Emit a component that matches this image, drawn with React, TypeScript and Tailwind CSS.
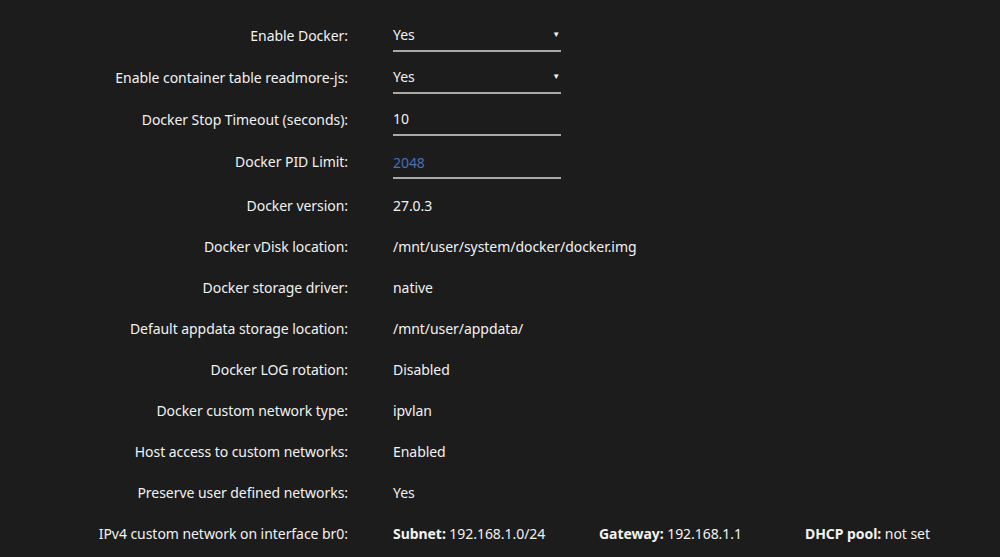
import React from 'react'

const font = { fontFamily: '"Noto Sans", "Open Sans", sans-serif' }

function Label({ children }: { children: React.ReactNode }) {
  return <div className="w-[348px] shrink-0 text-right">{children}</div>
}

function Select({ value }: { value: string }) {
  return (
    <div className="relative w-[168px] h-[33px] pt-[1px] flex items-center border-b-2 border-[#a8a8a8]">
      <span>{value}</span>
      <span className="absolute right-[1px] top-1/2 -translate-y-1/2 text-[8px] leading-none">▼</span>
    </div>
  )
}

function Input({ value, placeholder }: { value?: string; placeholder?: string }) {
  return (
    <div className="w-[168px] h-[33px] pt-[1px] flex items-center border-b-2 border-[#a8a8a8]">
      {value ? <span>{value}</span> : <span className="text-[#4a6fb5]">{placeholder}</span>}
    </div>
  )
}

const info: [string, string][] = [
  ['Docker version:', '27.0.3'],
  ['Docker vDisk location:', '/mnt/user/system/docker/docker.img'],
  ['Docker storage driver:', 'native'],
  ['Default appdata storage location:', '/mnt/user/appdata/'],
  ['Docker LOG rotation:', 'Disabled'],
  ['Docker custom network type:', 'ipvlan'],
  ['Host access to custom networks:', 'Enabled'],
  ['Preserve user defined networks:', 'Yes'],
]

export default function App() {
  return (
    <div className="w-[1000px] h-[557px] overflow-hidden bg-[#1c1c1c] text-[#f2f2f2] text-[14px] tracking-[-0.05px] pt-[14px]" style={font}>
      <div className="flex items-center h-[42px]">
        <Label>Enable Docker:</Label>
        <div className="ml-[45px]"><Select value="Yes" /></div>
      </div>
      <div className="flex items-center h-[42px]">
        <Label>Enable container table readmore-js:</Label>
        <div className="ml-[45px]"><Select value="Yes" /></div>
      </div>
      <div className="flex items-center h-[42px]">
        <Label>Docker Stop Timeout (seconds):</Label>
        <div className="ml-[45px]"><Input value="10" /></div>
      </div>
      <div className="flex items-center h-[42px] mb-[3px]">
        <Label>Docker PID Limit:</Label>
        <div className="ml-[45px] mt-[3px]"><Input placeholder="2048" /></div>
      </div>
      {info.map(([k, v]) => (
        <div key={k} className="flex items-center h-[41px]">
          <Label>{k}</Label>
          <div className="ml-[45px]">{v}</div>
        </div>
      ))}
      <div className="flex items-center h-[41px]">
        <Label>IPv4 custom network on interface br0:</Label>
        <div className="ml-[45px] flex">
          <span className="w-[206px]"><b>Subnet:</b> 192.168.1.0/24</span>
          <span className="w-[206px]"><b>Gateway:</b> 192.168.1.1</span>
          <span className="w-[206px]"><b>DHCP pool:</b> not set</span>
        </div>
      </div>
    </div>
  )
}
